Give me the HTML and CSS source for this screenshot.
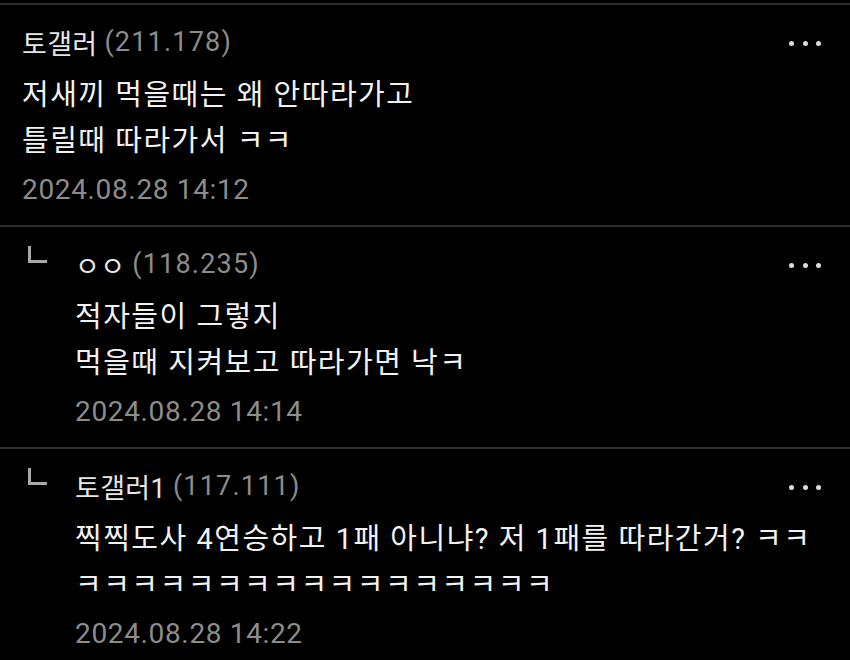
FILE: index.html
```html
<!DOCTYPE html>
<html lang="ko">
<head>
    <meta charset="UTF-8">
    <meta name="viewport" content="width=device-width, initial-scale=1.0">
    <title>댓글</title>
    <link rel="stylesheet" href="styles.css">
</head>
<body>
    <ul class="comments">
        <li class="comment">
            <div class="comment-body">
                <div class="comment-head">
                    <span class="nick">토갤러</span>
                    <span class="ip">(211.178)</span>
                    <button class="more" aria-label="더보기"><i></i><i></i><i></i></button>
                </div>
                <p class="text">저새끼 먹을때는 왜 안따라가고<br>틀릴때 따라가서 ㅋㅋ</p>
                <div class="date">2024.08.28 14:12</div>
            </div>
        </li>
        <li class="comment reply">
            <span class="reply-mark"></span>
            <div class="comment-body">
                <div class="comment-head">
                    <span class="nick">ㅇㅇ</span>
                    <span class="ip">(118.235)</span>
                    <button class="more" aria-label="더보기"><i></i><i></i><i></i></button>
                </div>
                <p class="text">적자들이 그렇지<br>먹을때 지켜보고 따라가면 낙ㅋ</p>
                <div class="date">2024.08.28 14:14</div>
            </div>
        </li>
        <li class="comment reply">
            <span class="reply-mark"></span>
            <div class="comment-body">
                <div class="comment-head">
                    <span class="nick">토갤러1</span>
                    <span class="ip">(117.111)</span>
                    <button class="more" aria-label="더보기"><i></i><i></i><i></i></button>
                </div>
                <p class="text">찍찍도사 4연승하고 1패 아니냐? 저 1패를 따라간거? ㅋㅋ<br>ㅋㅋㅋㅋㅋㅋㅋㅋㅋㅋㅋㅋㅋㅋㅋㅋㅋ</p>
                <div class="date">2024.08.28 14:22</div>
            </div>
        </li>
    </ul>
</body>
</html>
```

FILE: styles.css
```css
body {
    margin: 0;
    background-color: #000;
    font-family: Roboto, "Noto Sans CJK KR", sans-serif;
    color: #f2f2f2;
}

.comments {
    list-style: none;
    margin: 3px 0 0 0;
    padding: 0;
    border-top: 2px solid #2e2e2e;
}

.comment {
    display: flex;
    padding: 17px 29px 12px 22px;
    border-bottom: 2px solid #2e2e2e;
}

.comment.reply {
    padding-left: 28px;
}

/* ㄴ 답글 표시 */
.reply-mark {
    flex: none;
    box-sizing: border-box;
    width: 19px;
    height: 17px;
    margin: 2px 28px 0 0;
    border-left: 3px solid #a8a8a8;
    border-bottom: 3px solid #a8a8a8;
}

.comment-body {
    flex: 1;
    min-width: 0;
}

.comment-head {
    display: flex;
    align-items: center;
    height: 40px;
    font-size: 27px;
}

.nick {
    color: #e6e6e6;
    letter-spacing: 0.3px;
}

.ip {
    color: #8c8c8c;
    margin-left: 7px;
    letter-spacing: 1.2px;
}

.more {
    margin-left: auto;
    display: flex;
    gap: 8.5px;
    padding: 0;
    margin-top: 3px;
    background: none;
    border: none;
    cursor: pointer;
}

.more i {
    width: 5px;
    height: 5px;
    border-radius: 50%;
    background-color: #dcdcdc;
}

.text {
    margin: 10px 0 0 0;
    font-size: 29px;
    line-height: 46px;
    letter-spacing: 1.5px;
    white-space: nowrap;
}

.date {
    margin-top: 3px;
    font-size: 28px;
    line-height: 46px;
    letter-spacing: 0.65px;
    color: #8c8c8c;
}
```
